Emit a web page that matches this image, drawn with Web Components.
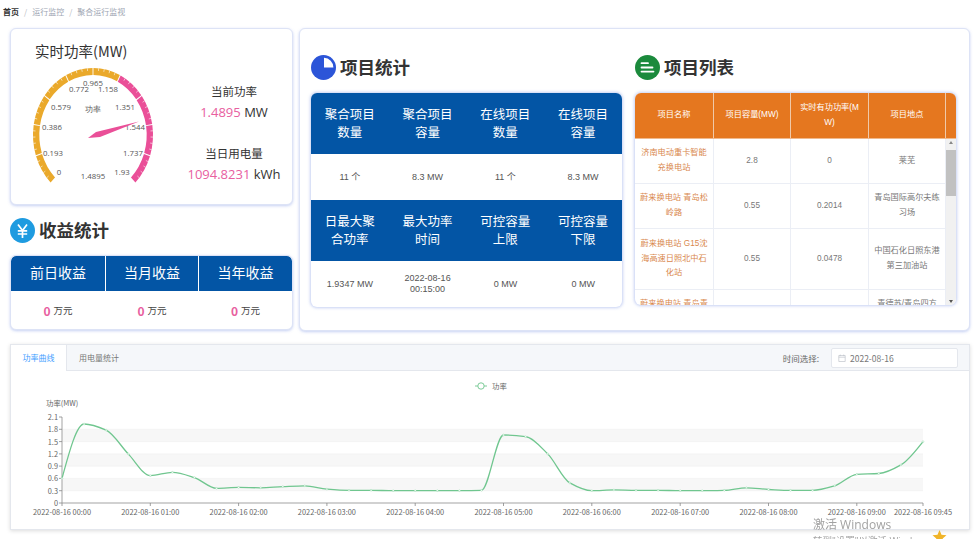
<!DOCTYPE html>
<html lang="zh"><head><meta charset="utf-8"><title>聚合运行监视</title>
<style>
html,body{margin:0;padding:0;background:#fff;overflow:hidden}
body{width:976px;height:539px;font-family:"Noto Sans CJK SC","Liberation Sans",sans-serif;color:#333}
</style></head><body>
<x-dashboard></x-dashboard>
<script>
const FONT='"Noto Sans CJK SC","Open Sans",sans-serif';
function def(name,html,init){
  customElements.define(name,class extends HTMLElement{
    connectedCallback(){
      if(this.shadowRoot)return;
      const s=this.attachShadow({mode:'open'});
      s.innerHTML=typeof html==='function'?html(this):html;
      if(init)init(s,this);
    }
  });
}
def('x-breadcrumb',`<style>:host{display:flex;align-items:center;height:28px;padding:0 0 6px 3px;box-sizing:border-box;font:8px ${FONT};color:#a0a6b3}
b{color:#333;font-weight:700}i{font-style:normal;margin:0 5px;color:#b5b9c2}</style><b>首页</b><i>/</i><span>运行监控</span><i>/</i><span>聚合运行监视</span>`);
def('x-card',`<style>:host{display:block;box-sizing:border-box;background:#fff;border:1px solid #dde3f6;border-radius:6px;box-shadow:0 1px 3px rgba(90,120,220,.35)}</style><slot></slot>`);
def('x-section-title',t=>{
  const icons={
    yen:`<circle cx="12.5" cy="12.5" r="12.5" fill="#1e9be0"/><path d="M8 6.500l4.500 6 4.500-6M7.800 12.800h9.400M7.800 16h9.400M12.500 12.500V20" fill="none" stroke="#fff" stroke-width="1.700"/>`,
    pie:`<circle cx="12.5" cy="12.5" r="12.5" fill="#2c55d8"/><path d="M13 2.800a9.700 9.700 0 0 1 9.400 9.700H13z" fill="#fff"/>`,
    list:`<circle cx="12.5" cy="12.5" r="12.5" fill="#1b8a3c"/><path d="M6.500 8.200h6.500M6.500 12.500h11M6.500 16.600h12" fill="none" stroke="#fff" stroke-width="1.800" stroke-linecap="round"/>`};
  return `<style>:host{display:flex;align-items:center;gap:4px;font:700 17.5px/26px ${FONT};color:#333}svg{width:25px;height:25px;flex:none}</style>
  <svg viewBox="0 0 25 25">${icons[t.getAttribute('icon')]}</svg><slot></slot>`;
});
def('x-gauge',()=>{
  const cx=82,cy=74,rx=60,ry=67,rad=a=>a*Math.PI/180;
  const P=(a,k=1)=>[(cx+rx*k*Math.cos(rad(a))).toFixed(2),(cy-ry*k*Math.sin(rad(a))).toFixed(2)];
  let band='',ticks='';
  const seg=(a,b,c)=>{const k0=.895,o=P(a),e=P(b),i=P(b,k0),j=P(a,k0);
    return `<path fill="${c}" d="M${o}A${rx} ${ry} 0 0 1 ${e}L${i}A${rx*k0} ${ry*k0} 0 0 0 ${j}Z"/>`;};
  for(let n=0;n<10;n++){
    const a=225-27*n,b=a-27;
    band+=seg(a-(n?.45:0),b+(n<9?.45:0),n<6?'#eaa92b':'#ea4f98');
    for(let m=1;m<5;m++){const t=a-m*5.4,p=P(t),q=P(t,.96);ticks+=`<path d="M${p}L${q}" stroke="#fff" stroke-width=".7" opacity=".85"/>`;}
  }
  const labels=[['0',59,172],['0.193',53,153],['0.386',52,127],['0.579',61,107],['0.772',79,89],['0.965',93,83],['1.158',108,89],['1.351',125,107],['1.544',135,127],['1.737',133,153],['1.93',122,172],['1.4895',93,176]];
  const txt=labels.map(([s,x,y])=>`<text x="${x-11}" y="${y-61+3}">${s}</text>`).join('');
  return `<style>:host{display:block;width:170px;height:130px}svg{display:block}text{font:7.8px "Open Sans",sans-serif;fill:#555;text-anchor:middle}</style>
  <svg width="170" height="130" viewBox="0 0 170 130">${band}${ticks}
  ${txt}<path d="M128 60.500L85 71 77 77 89 76Z" fill="#ea4f98"/>
  <text x="82" y="51" style="font:700 7px ${FONT};fill:#444">功率</text></svg>`;
});
def('x-metric',`<style>:host{display:block;text-align:center;font:11.5px/20px ${FONT};color:#333}
.v{font-size:13px;line-height:22px;font-family:"Open Sans",sans-serif;white-space:nowrap}
::slotted(em){font-style:normal;color:#e8609f}</style><div><slot name="label"></slot></div><div class="v"><slot></slot></div>`);
def('x-kpi-table',(t)=>{
  const rows=JSON.parse(t.getAttribute('data'));
  return `<style>:host{display:block;width:311px;height:214px;border-radius:6px;overflow:hidden;background:#fff;box-shadow:0 0 3px 1px rgba(90,120,220,.35);font-family:${FONT}}
  .h,.v{display:grid;grid-template-columns:repeat(4,1fr);text-align:center}
  .h{background:#0355a5;color:#fff;font-size:12.5px;line-height:18.5px;height:61px;align-items:center;padding-bottom:1px;box-sizing:border-box}
  .v{font:9px/11px "Liberation Sans",${FONT};color:#555;align-items:center}
  .v.a{height:46px}.v.b{height:46px}
  </style>`+rows.map((r,i)=>`<div class="h">${r.h.map(x=>`<div>${x}</div>`).join('')}</div><div class="v ${i?'b':'a'}">${r.v.map(x=>`<div>${x}</div>`).join('')}</div>`).join('');
});
def('x-income',`<style>:host{display:grid;grid-template-columns:94px 92px 93px;column-gap:1px;height:73px;font-family:${FONT}}
.h{background:#0355a5;color:#fff;font-size:14px;height:35px;line-height:33px;text-align:center}
.v{height:38px;display:flex;justify-content:center;align-items:center;gap:3px;font-size:9.5px;color:#444}
b{color:#e8609f;font-size:12px}
.l{border-top-left-radius:5px}.r{border-top-right-radius:5px}</style>
<div class="h l">前日收益</div><div class="h">当月收益</div><div class="h r">当年收益</div>
<div class="v"><b>0</b>万元</div><div class="v"><b>0</b>万元</div><div class="v"><b>0</b>万元</div>`);
def('x-project-table',()=>{
  const rows=[
   [['济南电动重卡智能','充换电站'],'2.8','0',['莱芜'],45],
   [['蔚来换电站 青岛松','岭路'],'0.55','0.2014',['青岛国际高尔夫练','习场'],45],
   [['蔚来换电站 G15沈','海高速日照北中石','化站'],'0.55','0.0478',['中国石化日照东港','第三加油站'],61],
   [['蔚来换电站 青岛青','岛路'],'','',['青德苏/青岛四方','区'],45]];
  return `<style>:host{display:block;width:321px;height:212px;border-radius:6px;overflow:hidden;background:#fff;box-shadow:0 0 3px 1px rgba(90,120,220,.35);font:8.2px/14.7px "Liberation Sans",${FONT};color:#777}
  .g{display:grid;grid-template-columns:79px 77px 78px 77px 10px}
  .head{height:45px;background:#e5771f;color:#fff;border-bottom:1px solid #f0b98c}
  .head>div{display:flex;align-items:center;justify-content:center;text-align:center;border-right:1px solid #f0c9a8;box-sizing:border-box;padding:0 7px;word-break:break-all}
  .head>div:last-child{border:0;padding:0}
  .main{display:flex;height:166px;overflow:hidden}
  .rows{width:311px;flex:none}
  .row{display:grid;grid-template-columns:79px 77px 78px 77px}
  .row>div{display:flex;align-items:center;justify-content:center;text-align:center;border-right:1px solid #ebeef5;border-bottom:1px solid #ebeef5;box-sizing:border-box;padding:0 3px}
  .row>div:first-child{color:#d9884e}
  .row>div>span{display:block;white-space:nowrap}
  .bar{width:10px;background:#f1f1f1;position:relative;flex:none}
  .thumb{margin:11px 0 0;height:46px;background:#c1c1c1}
  .up,.dn{position:absolute;left:2.500px;border:2.500px solid transparent}
  .up{top:2px;border-top:0;border-bottom:3px solid #888}.dn{bottom:2px;border-bottom:0;border-top:3px solid #555}
  </style>
  <div class="g head"><div>项目名称</div><div>项目容量(MW)</div><div>实时有功功率(MW)</div><div>项目地点</div><div></div></div>
  <div class="main"><div class="rows">${rows.map(r=>`<div class="row" style="height:${r[4]}px"><div><span>${r[0].join('<br>')}</span></div><div>${r[1]}</div><div>${r[2]}</div><div><span>${r[3].join('<br>')}</span></div></div>`).join('')}</div>
  <div class="bar"><div class="up"></div><div class="thumb"></div><div class="dn"></div></div></div>`;
});
def('x-power-chart',()=>{
  const V=[.6,1.93,1.78,1.2,.67,.75,.62,.36,.38,.37,.40,.42,.34,.31,.31,.30,.30,.30,.30,.31,1.66,1.62,1.2,.49,.30,.32,.31,.31,.30,.30,.31,.37,.33,.31,.31,.42,.70,.72,.93,1.5];
  const x0=51,x1=912,y0=132,yT=46;
  const X=i=>x0+(x1-x0)*i/39,Y=v=>y0-(y0-yT)*v/2.1;
  const pts=V.map((v,i)=>[X(i),Y(v)]);
  const h=pts[1][0]-pts[0][0],n=pts.length;
  const sl=[];for(let i=0;i<n-1;i++)sl.push((pts[i+1][1]-pts[i][1])/h);
  const m=pts.map((_,i)=>{
    if(i===0)return sl[0]*1.5;
    if(i===n-1)return sl[n-2]*1.2;
    const a=sl[i-1],b=sl[i];
    return a*b<=0?0:2*a*b/(a+b);
  });
  let d=`M${pts[0][0].toFixed(1)} ${pts[0][1].toFixed(1)}`;
  for(let i=0;i<n-1;i++){
    const p=pts[i],q=pts[i+1];
    d+=`C${(p[0]+h/3).toFixed(1)} ${(p[1]+m[i]*h/3).toFixed(1)} ${(q[0]-h/3).toFixed(1)} ${(q[1]-m[i+1]*h/3).toFixed(1)} ${q[0].toFixed(1)} ${q[1].toFixed(1)}`;
  }
  let bands='',ylab='',xlab='',tk='';
  for(let i=1;i<7;i++){
    const v=i*.3,y=Y(v),t=Y(v+.3);
    bands+=`<rect x="${x0}" y="${t.toFixed(1)}" width="${x1-x0}" height="${(y-t).toFixed(1)}" fill="${i%2?'#f7f7f7':'#fff'}"/>`;
    bands+=`<path d="M${x0} ${y.toFixed(1)}H${x1}" stroke="#f0f0f0" stroke-width=".7"/>`;
  }
  for(let i=0;i<=7;i++){
    const v=i*.3,y=Y(v);
    tk+=`<path d="M${x0-3} ${y.toFixed(1)}H${x0}" stroke="#888" stroke-width=".8"/>`;
    ylab+=`<text x="${x0-4}" y="${(y+3).toFixed(1)}" text-anchor="end">${i?(Math.round(v*10)/10):0}</text>`;
  }
  const T=[0,4,8,12,16,20,24,28,32,36,39],N=['00:00','01:00','02:00','03:00','04:00','05:00','06:00','07:00','08:00','09:00','09:45'];
  T.forEach((t,i)=>{tk+=`<path d="M${X(t).toFixed(1)} ${y0}v3" stroke="#888" stroke-width=".8"/>`;
    xlab+=`<text x="${X(t).toFixed(1)}" y="144" text-anchor="middle">2022-08-16 ${N[i]}</text>`;});
  return `<style>:host{display:block}svg{display:block}text{font:7.400px "Noto Sans CJK SC","Open Sans",sans-serif;fill:#666}</style>
  <svg width="958" height="158" viewBox="0 0 958 158">
  <path d="M464 15h12" stroke="#7ccb98" stroke-width="1"/><circle cx="470" cy="15" r="3.200" fill="#fff" stroke="#7ccb98"/>
  <text x="481" y="18">功率</text><text x="35" y="35">功率(MW)</text>
  ${bands}<path d="M${x0} ${yT}V${y0}H${x1}" fill="none" stroke="#999" stroke-width=".9"/>${tk}${ylab}${xlab}
  <path d="${d}" fill="none" stroke="#70c68f" stroke-width="1.300"/>
  ${pts.map(p=>`<circle cx="${p[0].toFixed(1)}" cy="${p[1].toFixed(1)}" r=".9" fill="#fff" stroke="#9ddab3" stroke-width=".5"/>`).join('')}
  </svg>`;
});
def('x-tabs',`<style>:host{display:block;font:8px ${FONT};color:#777}
.bar{display:flex;align-items:center;height:25px;background:#f5f7fa;border-bottom:1px solid #e4e7ed}
.t{height:26px;line-height:25px;box-sizing:border-box;padding:0 12px}
.t.on{background:#fff;color:#409eff;border-right:1px solid #e4e7ed;width:56px;text-align:center;padding:0}
.sp{flex:1}.lab{margin-right:12px;color:#666;font-size:8.500px}
.date{width:127px;height:20px;background:#fff;border:1px solid #e4e7ed;border-radius:2px;box-sizing:border-box;display:flex;align-items:center;gap:4px;padding-left:6px;margin-right:11px;font-size:8.500px;color:#777}
svg{flex:none}</style>
<div class="bar"><div class="t on">功率曲线</div><div class="t">用电量统计</div><div class="sp"></div><div class="lab">时间选择:</div>
<div class="date"><svg width="8" height="8" viewBox="0 0 8 8"><path d="M.8 1.500h6.400v6H.8zM.8 3.200h6.400M2.300.6v1.500M5.700.6v1.500" fill="none" stroke="#c0c4cc" stroke-width=".7"/></svg>2022-08-16</div></div><slot></slot>`);
def('x-watermark',`<style>:host{position:fixed;left:813px;top:516px;font:12px/17px "Open Sans","Noto Sans CJK SC",sans-serif;color:#a2a2a2;pointer-events:none;white-space:nowrap}
.s{font-size:9.500px;line-height:14px;margin-top:1px}svg{position:absolute;left:119px;top:14px}</style>
<div>激活 Windows</div><div class="s">转到"设置"以激活 Windows。</div>
<svg width="15" height="14" viewBox="0 0 15 14"><path d="M7.500 0l2 4.800 5 .4-3.800 3.300 1.200 5-4.400-2.700L3.100 13.500l1.200-5L.5 5.200l5-.4z" fill="#f0b429"/></svg>`);
def('x-dashboard',`<style>
:host{display:block;width:976px;height:539px;position:relative}
.top{display:grid;grid-template-columns:283px 671px;column-gap:6px;margin-left:10px}
.left{display:flex;flex-direction:column}
.gcard{height:177px}
.power{height:175px;display:grid;grid-template-columns:170px 1fr;grid-template-rows:20px 1fr;box-sizing:border-box;padding:12px 0 0 0}
.power h3{grid-column:1/-1;margin:0 0 0 24px;font:400 14.500px/20px ${FONT};color:#333}
.metrics{display:flex;flex-direction:column;gap:20px;padding:20px 5px 0 0}
.st2{margin:12px 0 12px}
.income{height:75px;overflow:hidden}
.right{height:301px;box-sizing:border-box;padding:25px 12px 0 11px;display:grid;grid-template-columns:311px 321px;column-gap:13px;grid-template-rows:26px 1fr;row-gap:13px}
.bottom{margin:13px 0 0 10px;height:186px;width:960px;border-radius:0;overflow:hidden;border-color:#e4e7ed;box-shadow:0 1px 4px rgba(0,0,0,.14)}
</style>
<x-breadcrumb></x-breadcrumb>
<div class="top"><div class="left">
  <x-card class="gcard"><div class="power">
    <h3>实时功率(MW)</h3>
    <x-gauge></x-gauge>
    <div class="metrics">
      <x-metric><span slot="label">当前功率</span><em>1.4895</em> MW</x-metric>
      <x-metric><span slot="label">当日用电量</span><em>1094.8231</em> kWh</x-metric>
    </div></div></x-card>
  <x-section-title icon="yen" class="st2">收益统计</x-section-title>
  <x-card class="income"><x-income></x-income></x-card>
</div>
<x-card><div class="right">
  <x-section-title icon="pie">项目统计</x-section-title>
  <x-section-title icon="list">项目列表</x-section-title>
  <x-kpi-table data='[{"h":["聚合项目<br>数量","聚合项目<br>容量","在线项目<br>数量","在线项目<br>容量"],"v":["11 个","8.3 MW","11 个","8.3 MW"]},{"h":["日最大聚<br>合功率","最大功率<br>时间","可控容量<br>上限","可控容量<br>下限"],"v":["1.9347 MW","2022-08-16<br>00:15:00","0 MW","0 MW"]}]'></x-kpi-table>
  <x-project-table></x-project-table>
</div></x-card></div>
<x-card class="bottom"><x-tabs><x-power-chart></x-power-chart></x-tabs></x-card>
<x-watermark></x-watermark>`);
</script>
</body></html>
